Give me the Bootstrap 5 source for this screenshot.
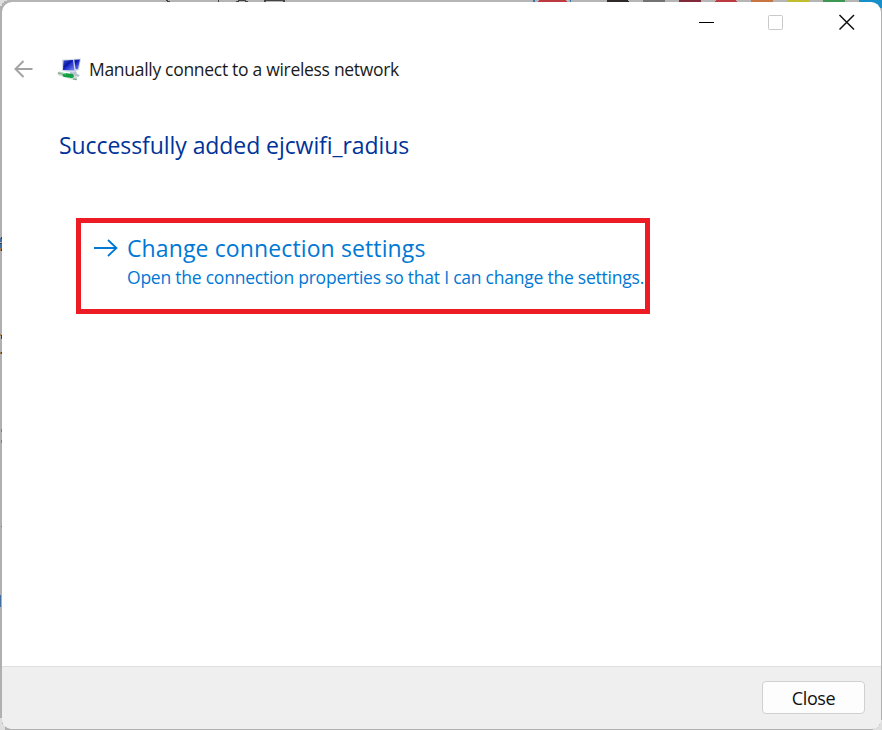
<!DOCTYPE html>
<html lang="en">
<head>
<meta charset="utf-8">
<meta name="viewport" content="width=device-width, initial-scale=1">
<title>Manually connect to a wireless network</title>
<link href="https://cdn.jsdelivr.net/npm/bootstrap@5.3.0/dist/css/bootstrap.min.css" rel="stylesheet">
<style>
body{width:882px;height:730px;background:#b0b0b0;font-family:"Open Sans","Noto Sans",sans-serif;color:#1a1a1a}
.backdrop{left:0;top:0;z-index:0}
.wizard{z-index:1;width:879px;height:727px;margin:2px 1px 1px 2px;background:#fff;border-radius:10px}
.caption-bar{height:40px}
.caption-btn{width:70px;height:40px;line-height:0}
.title-row{height:54px;padding-left:12px}
.title-row .computers{margin-left:24px;margin-right:8px}
.wizard-title{font-size:17.5px;line-height:24px;letter-spacing:-.3px;white-space:nowrap}
.main-heading{font-size:23px;line-height:32px;letter-spacing:-.07px;color:#003399;margin:33px 0 0 57px;white-space:nowrap}
.command{width:574px;height:96px;margin:57px 0 0 74px;border:5px solid #ed1c24;padding:9px 0 0 13px;color:#0078d4;white-space:nowrap}
.command-arrow{margin:7px 9px 0 0;flex:none}
.command-title{font-size:23px;line-height:32px;letter-spacing:.12px}
.command-note{font-size:17.5px;line-height:26px;letter-spacing:-.23px}
.wizard-footer{height:63px;background:#efefef;border-top:1px solid #dfdfdf;border-radius:0 0 10px 10px;padding:14px 16px 0 0}
.close-btn{width:103px;height:33px;background:#fdfdfd;border:1px solid #d0d0d0;border-radius:4px;font-size:18px;line-height:32px;letter-spacing:-.4px;color:#111}
</style>
<script src="https://cdn.jsdelivr.net/npm/bootstrap@5.3.0/dist/js/bootstrap.bundle.min.js"></script>
</head>
<body class="m-0 overflow-hidden position-relative d-flex">
<svg class="backdrop position-absolute" width="882" height="730" shape-rendering="crispEdges" aria-hidden="true">
<path fill="#b5b5b5" d="M0 0h882v2H0z"/>
<path fill="#dedede" d="M0 0h7v1H4v2H2v3H0zM0 718h2v6h3v6H0zM873 730h9v-10h-2v5h-4z"/>
<path fill="#444" d="M166 0h2v1h2v1h-3zM218 0h1v2h-1zM236 1h2V0h8v1h2v1h-3V1h-6v1h-3zM264 0h21v2h-2V1h-17v1h-2z"/>
<path fill="#bd3b40" d="M539 0h26l2 2h-30zM716 0h20l1 2h-22z"/>
<path fill="#3474ae" d="M533 0h2v2h-2zM570 0h1v2h-1z"/>
<path fill="#2d2929" d="M607 0h21l1 2h-22z"/>
<path fill="#727272" d="M643 0h22v2h-22z"/>
<path fill="#7f2939" d="M679 0h22v2h-22z"/>
<path fill="#c87543" d="M751 0h22v2h-22z"/>
<path fill="#c2bd2c" d="M787 0h22v2h-22z"/>
<path fill="#3d9652" d="M823 0h22v2h-22z"/>
<path fill="#168fcb" d="M859 0h23v8h-4V4h-7V2h-12z"/>
<path fill="#416da0" d="M0 238h2v4H0zM0 244h2v5H0zM0 595h1v12H0z"/>
<path fill="#403b43" d="M1 237h1v2H1zM0 243h2v1H0zM1 249h1v2H1zM1 335h1v4H1zM1 352h1v2H1z"/>
<path fill="#a27749" d="M0 248h1v3H0zM0 334h1v2H0zM0 352h1v2H0zM1 429h1v3H1zM1 440h1v3H1zM1 526h1v1H1z"/>
</svg>
<main class="wizard position-relative d-flex flex-column">
<header class="caption-bar d-flex justify-content-end">
<button class="caption-btn btn p-0 border-0 rounded-0" aria-label="Minimize"><svg width="70" height="40"><path d="M28 20.500h15" stroke="#000" fill="none"/></svg></button>
<button class="caption-btn btn p-0 border-0 rounded-0" aria-label="Maximize"><svg width="70" height="40"><rect x="27.500" y="13.500" width="14" height="14" rx="1" fill="none" stroke="#c9c9c9"/></svg></button>
<button class="caption-btn btn p-0 border-0 rounded-0" aria-label="Close window"><svg width="70" height="40"><path d="M28.500 13l14.500 14.500M43 13L28.500 27.500" stroke="#111" stroke-width="1.500" fill="none"/></svg></button>
</header>
<div class="title-row d-flex align-items-center">
<svg width="19" height="18" fill="none" stroke="#a3a3a3" stroke-width="2" aria-hidden="true"><path d="M9.500 1L1.500 9l8 8M2 9h16.500"/></svg>
<svg class="computers" width="24" height="24" viewBox="0 0 24 24" aria-hidden="true">
<defs><linearGradient id="screen" x1="0" y1="0" x2="1" y2="1"><stop offset="0" stop-color="#3d58cc"/><stop offset=".4" stop-color="#0a16a6"/><stop offset=".52" stop-color="#2233cc"/><stop offset="1" stop-color="#7f90f4"/></linearGradient></defs>
<path fill="#d3d8df" d="M13 2l11-.5L22 13l-7 2z"/><path fill="url(#screen)" d="M14 3l9-.5L21 12l-6 1z"/>
<path fill="#b8c2ce" d="M13 14h6l1 3 3 1-2 2-8-3z"/>
<path fill="#d6dde8" d="M5 2.500L17 2l2 12-2 1.500L5 14z"/><path fill="url(#screen)" d="M6.500 3.500L16 3l1.500 10.500L6 13z"/>
<path d="M2.500 16.500L18 21" stroke="#cfdcd4" stroke-width="4" stroke-linecap="round"/><path d="M1 16l5 1M16 22l4 .5" stroke="#8aad95" stroke-width="1.500"/>
<path d="M7.500 18l7.500 1" stroke="#12a044" stroke-width="3.800" stroke-linecap="round"/><path d="M4 16l5 1" stroke="#8be3a0"/>
</svg>
<div class="wizard-title">Manually connect to a wireless network</div>
</div>
<h1 class="main-heading fw-normal mb-0">Successfully added ejcwifi_radius</h1>
<a class="command d-flex align-items-start text-decoration-none" href="#">
<svg class="command-arrow" width="24" height="18" fill="none" stroke="#0078d4" stroke-width="1.800" aria-hidden="true"><path d="M0 9h22.500M14 1l8.500 8L14 17"/></svg>
<div><div class="command-title">Change connection settings</div><div class="command-note">Open the connection properties so that I can change the settings.</div></div>
</a>
<footer class="wizard-footer mt-auto d-flex justify-content-end align-items-start"><button class="close-btn btn p-0">Close</button></footer>
</main>
</body>
</html>
